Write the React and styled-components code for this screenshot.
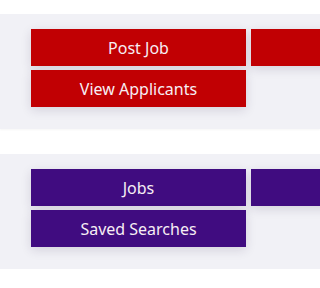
import React from 'react';
import styled, { createGlobalStyle } from 'styled-components';

const Global = createGlobalStyle`
  html, body {
    margin: 0;
    background: #fff;
    overflow-x: hidden;
    font-family: 'Noto Sans', 'Open Sans', sans-serif;
  }
`;

const Page = styled.div`
  width: 100%;
  overflow: hidden;
  padding-top: 14px;
  display: flex;
  flex-direction: column;
  gap: 25px;
`;

const Panel = styled.section`
  min-width: 0;
  background: #f1f1f6;
  padding: 15px 0 22px 31px;
  overflow: hidden;
  box-shadow: 0 1px 2px rgba(0, 0, 0, 0.04);
`;

const Grid = styled.div`
  display: grid;
  grid-template-columns: 215px 215px;
  column-gap: 5px;
  row-gap: 4px;
`;

const Button = styled.a`
  display: flex;
  align-items: center;
  justify-content: center;
  height: 37px;
  background: ${p => p.color};
  color: #f7eef4;
  font-size: 16px;
  text-decoration: none;
  box-shadow: 0 3px 10px rgba(40, 30, 70, 0.14);
`;

const RED = '#c10003';
const PURPLE = '#400c80';

const App = () => (
  <>
    <Global />
    <Page>
      <Panel>
        <Grid>
          <Button color={RED}>Post Job</Button>
          <Button color={RED} aria-label="Search Resumes" />
          <Button color={RED}>View Applicants</Button>
        </Grid>
      </Panel>
      <Panel>
        <Grid>
          <Button color={PURPLE}>Jobs</Button>
          <Button color={PURPLE} aria-label="Profile" />
          <Button color={PURPLE}>Saved Searches</Button>
        </Grid>
      </Panel>
    </Page>
  </>
);

export default App;
